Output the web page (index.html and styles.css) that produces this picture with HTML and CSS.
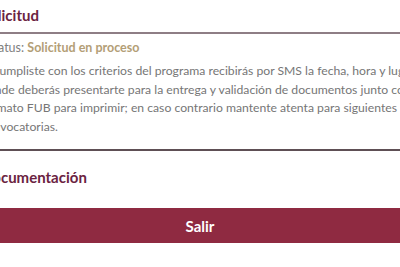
FILE: index.html
```html
<!DOCTYPE html>
<html lang="es">
<head>
<meta charset="utf-8">
<link rel="stylesheet" href="styles.css">
</head>
<body>
<div class="page">
  <section class="card">
    <h2 class="card-title">Solicitud</h2>
    <div class="card-body">
      <p class="status">Estatus: <strong>Solicitud en proceso</strong></p>
      <p class="message">Si cumpliste con los criterios del programa recibirás por SMS la fecha, hora y lugar donde deberás presentarte para la entrega y validación de documentos junto con tu formato FUB para imprimir; en caso contrario mantente atenta para siguientes convocatorias.</p>
    </div>
  </section>
  <section class="card">
    <h2 class="card-title plain">Documentación</h2>
  </section>
  <button class="exit">Salir</button>
</div>
</body>
</html>
```

FILE: styles.css
```css
html, body {
  margin: 0;
  padding: 0;
  background: #ffffff;
  overflow: hidden;
}
.page {
  width: 446px;
  margin-left: -19px;
  font-family: Lato, "Open Sans", sans-serif;
}
.card-title {
  margin: 0;
  padding: 5px 0 7px;
  font-size: 15px;
  line-height: 20px;
  font-weight: 700;
  color: #6b2341;
  border-bottom: 2px solid #8e7e85;
}
.card-title.plain {
  border-bottom: none;
  padding-top: 16px;
  padding-bottom: 0;
}
.card-body {
  border-bottom: 2px solid #5e4f55;
  padding-bottom: 13px;
}
.status {
  margin: 0;
  padding-top: 5px;
  font-size: 12.5px;
  line-height: 18px;
  color: #808080;
}
.status strong {
  color: #b39e76;
  font-weight: 700;
}
.message {
  margin: 5px 0 0;
  font-size: 12.2px;
  line-height: 18.5px;
  color: #767676;
}
.exit {
  display: block;
  width: calc(100% - 8px);
  height: 35px;
  margin-top: 21px;
  border: none;
  background: #8f2a41;
  color: #ffffff;
  font-family: Lato, "Open Sans", sans-serif;
  font-size: 15px;
  font-weight: 700;
}
```
